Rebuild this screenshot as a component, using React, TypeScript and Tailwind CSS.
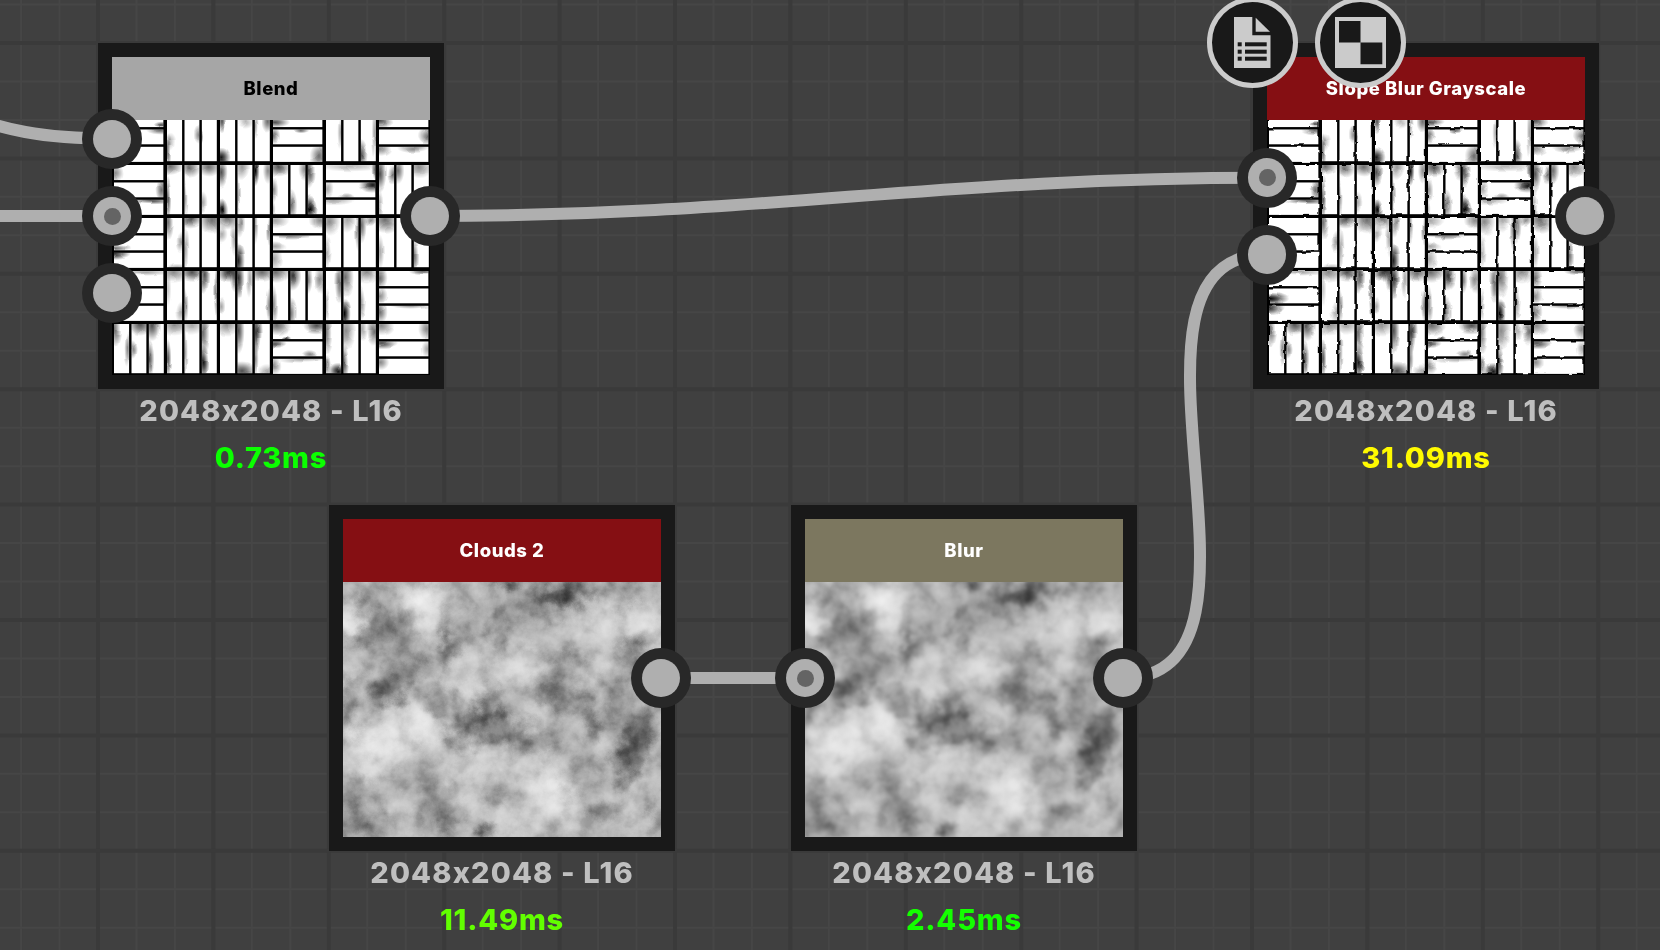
import React from "react";

type Smudge = [number, number, number, number, number];

const MAJOR = 115.4;
const majorX = Array.from({ length: 16 }, (_, i) => 98 - MAJOR + i * MAJOR);
const majorY = Array.from({ length: 10 }, (_, i) => 43 - MAJOR + i * MAJOR);

const CELLS = ["HVVHVH", "HVVHVH", "HVVVHV", "HVVHVV", "HVVVVH", "VVVHVH"];

/* Shading blotches, one list for each half of the tile texture, in thirds of a pixel. */
const LEFT: Smudge[] = [
  [150,15,20,8,.6],[145,34,35,10,.5],[168,100,8,40,.5],[172,70,14,20,.25],[260,45,12,22,.4],[270,50,5,20,.7],[327,10,10,25,.6],[328,115,22,22,.8],[400,7,20,15,.25],[467,8,15,25,.5],[430,20,6,30,.3],
  [10,165,20,20,.4],[152,210,15,28,.5],[120,246,50,8,.6],[175,142,30,22,.5],[168,240,8,50,.6],[235,144,25,25,.5],[220,240,6,40,.3],[290,144,30,22,.5],[272,250,12,25,.3],[328,160,15,35,.6],[328,275,16,28,.9],[390,144,20,30,.35],[378,230,6,50,.3],[430,155,10,35,.9],[468,155,12,30,.4],
  [168,310,12,40,.5],[208,370,12,25,.35],[195,444,25,10,.3],[235,300,30,22,.6],[220,390,8,50,.3],[300,300,30,35,.5],[345,300,35,24,.5],[328,345,15,20,.3],[368,360,10,40,.3],[385,310,12,35,.4],[378,425,16,40,.8],[430,310,8,50,.4],[472,330,6,40,.4],[12,404,34,12,.7],[10,388,40,8,.5],
  [185,460,35,24,.4],[168,510,8,40,.2],[208,580,15,25,.3],[240,460,30,22,.6],[220,560,8,40,.4],[275,470,14,40,.6],[313,520,6,60,.4],[350,460,28,22,.7],[366,480,12,30,.5],[328,560,10,20,.3],[380,480,14,45,.7],[414,480,8,40,.3],[450,460,35,22,.5],[472,560,8,40,.4],[100,460,60,8,.3],[10,539,44,14,.9],[10,565,34,16,.7],
  [9,630,15,40,.5],[47,690,8,40,.4],[85,616,30,28,.6],[62,690,10,20,.4],[120,620,20,35,.6],[112,720,12,45,.6],[190,616,40,28,.4],[168,720,8,45,.6],[240,616,30,24,.3],[220,700,6,60,.3],[273,640,15,50,.5],[272,730,14,40,.8],[345,616,35,28,.4],[380,635,14,50,.6],[390,756,34,22,.6],[432,640,14,50,.7],[430,720,8,40,.4],[467,758,22,20,.3],
];
const RIGHT: Smudge[] = [
  [15,10,35,12,.6],[12,50,15,20,.5],[95,35,20,6,.5],[150,110,24,28,.5],[212,40,8,40,.3],[273,105,16,34,.6],[313,40,6,60,.3],[330,8,34,16,.6],[472,50,25,22,.5],[332,90,25,16,.4],[430,87,38,12,.4],
  [25,144,34,24,.6],[10,215,12,30,.4],[10,270,8,20,.3],[104,150,15,25,.4],[64,260,14,38,.5],[116,155,15,40,.6],[118,268,18,30,.9],[240,142,80,12,.25],[314,155,8,22,.5],[308,198,34,20,.8],[172,210,15,20,.3],[230,232,20,8,.3],[190,244,50,14,.3],[330,165,15,40,.6],[328,260,10,40,.3],[369,165,14,24,.5],[384,155,15,30,.5],[450,144,30,28,.4],
  [12,302,34,20,.3],[150,304,24,22,.4],[60,349,60,8,.4],[12,385,30,12,.3],[12,420,20,28,.3],[178,305,26,34,.4],[170,400,10,40,.3],[232,302,20,30,.3],[264,330,8,50,.4],[275,315,12,44,.5],[300,302,15,15,.4],[345,305,34,28,.5],[330,400,10,40,.3],[433,410,12,40,.5],
  [20,460,34,24,.5],[10,560,10,48,.4],[66,470,22,34,.7],[64,580,14,34,.5],[113,480,12,34,.5],[152,480,15,34,.4],[210,490,12,50,.5],[170,560,8,40,.3],[226,475,20,44,.5],[223,585,15,34,.9],[290,460,30,26,.4],[273,550,12,40,.4],[330,475,18,28,.5],[460,458,34,8,.5],[330,530,18,22,.4],[330,580,18,25,.5],[420,562,50,8,.4],
  [20,620,36,22,.5],[140,620,34,18,.6],[48,658,12,6,.7],[12,675,30,12,.6],[120,706,20,10,.4],[12,740,18,24,.4],[100,721,60,8,.3],[170,640,14,50,.5],[205,758,24,18,.8],[170,740,10,24,.5],[228,635,24,44,.4],[222,730,12,40,.6],[310,635,17,34,.5],[276,630,12,28,.3],[334,620,30,22,.4],[470,630,20,28,.4],[335,672,38,12,.6],[472,690,14,20,.3],[332,730,20,18,.4],
];
const SMUDGES: Smudge[] = [
  ...LEFT.map(([x, y, a, b, o]): Smudge => [x / 3, 62 + y / 3, a / 3, b / 3, o]),
  ...RIGHT.map(([x, y, a, b, o]): Smudge => [158 + x / 3, 62 + y / 3, a / 3, b / 3, o]),
];

const BRICKS = CELLS.flatMap((row, r) =>
  row.split("").flatMap((kind, c) =>
    [0, 1, 2].map((i) =>
      kind === "V"
        ? { x: c * 53 + 2 + i * 17.3, y: r * 53 + 2, w: 15.3, h: 49.4 }
        : { x: c * 53 + 2, y: r * 53 + 2 + i * 17.3, w: 49.6, h: 15.3 },
    ),
  ),
);

function Tiles({ id, rough }: { id: string; rough?: boolean }) {
  return (
    <svg className="block h-[255px] w-[318px]" viewBox="0 63 318 255">
      <defs>
        <radialGradient id={`${id}-g`}>
          <stop offset="0" stopColor="#000" />
          <stop offset=".35" stopColor="#000" stopOpacity=".7" />
          <stop offset=".75" stopColor="#000" stopOpacity=".25" />
          <stop offset="1" stopColor="#000" stopOpacity="0" />
        </radialGradient>
        <filter id={`${id}-w`} x="0" y="0" width="318" height="318" filterUnits="userSpaceOnUse" colorInterpolationFilters="sRGB">
          <feTurbulence type="fractalNoise" baseFrequency="0.11" numOctaves={1} seed={7} />
          <feDisplacementMap in="SourceGraphic" scale={3.2} xChannelSelector="R" yChannelSelector="G" result="d" />
          <feGaussianBlur in="d" stdDeviation="0.35" />
        </filter>
        <filter id={`${id}-e`} x="0" y="0" width="318" height="318" filterUnits="userSpaceOnUse" colorInterpolationFilters="sRGB">
          <feTurbulence type="fractalNoise" baseFrequency="0.07" numOctaves={1} seed={3} />
          <feDisplacementMap in="SourceGraphic" scale={5} xChannelSelector="R" yChannelSelector="G" />
        </filter>
      </defs>
      <rect width="318" height="318" fill="#000" />
      <g filter={rough ? `url(#${id}-w)` : undefined}>
        <rect width="318" height="318" fill="#000" />
        {BRICKS.map((b, i) => (
          <svg key={i} x={b.x} y={b.y} width={b.w} height={b.h} viewBox={`${b.x} ${b.y} ${b.w} ${b.h}`} overflow="hidden">
            <rect x={b.x} y={b.y} width={b.w} height={b.h} fill="#fff" />
            <g filter={`url(#${id}-e)`}>
              {SMUDGES.filter(([x, y]) => x > b.x - 1.2 && x < b.x + b.w + 1.1 && y > b.y - 1.2 && y < b.y + b.h + 1.1).map(
                ([x, y, rx, ry, o], k) => (
                  <ellipse key={k} cx={x} cy={y} rx={rx * 1.3} ry={ry * 1.35} fill={`url(#${id}-g)`} opacity={Math.min(1, o * 1.15)} />
                ),
              )}
            </g>
          </svg>
        ))}
      </g>
    </svg>
  );
}

const LIGHT: Smudge[] = [
  [305,300,50,50,.8],[345,370,45,50,.55],[95,370,40,55,.7],[850,370,110,60,.45],[980,380,60,60,.55],[590,500,60,50,.55],[430,540,60,60,.5],[820,500,30,50,.4],[260,640,50,45,.6],[320,690,50,45,.7],[150,740,80,70,.7],[230,720,80,50,.4],[150,820,60,30,.3],[480,780,110,50,.45],[690,850,80,60,.7],[640,650,40,35,.4],[730,920,80,50,.5],[590,960,80,50,.4],[440,900,60,80,.35],[960,920,70,80,.35],[220,940,60,40,.3],[100,520,30,25,.4],[850,600,40,30,.3],[860,730,40,40,.3],[480,460,40,30,.3],
];
const DARK: Smudge[] = [
  [180,365,45,35,.5],[200,410,70,30,.3],[145,290,40,30,.3],[190,575,40,30,.65],[240,530,50,35,.55],[290,510,50,30,.4],[130,420,40,20,.3],[390,440,28,35,.6],[430,370,50,40,.25],[575,250,30,15,.7],[540,400,25,50,.35],[715,290,35,25,.8],[740,265,80,40,.5],[690,310,100,35,.3],[800,290,30,20,.4],[910,265,40,40,.35],[735,480,35,25,.45],[700,560,50,40,.55],[745,600,45,30,.5],[810,660,22,60,.55],[500,655,45,28,.85],[510,600,30,45,.5],[440,690,40,45,.6],[550,700,50,35,.6],[630,720,60,40,.4],[370,600,50,30,.35],[940,470,40,40,.5],[965,690,35,60,.65],[915,800,35,40,.8],[945,740,30,50,.6],[850,930,40,30,.5],[880,570,50,40,.3],[80,590,25,40,.35],[80,670,25,50,.35],[370,930,50,60,.4],[370,970,20,20,.4],[120,975,70,35,.5],[495,1000,25,20,.6],[520,880,30,40,.25],[330,860,50,60,.2],[1010,960,20,60,.35],[780,850,40,70,.3],[100,900,40,60,.25],[1010,560,30,60,.3],[600,320,80,50,.2],[230,470,60,40,.2],[900,660,50,70,.3],
];

function Clouds({ id, soft }: { id: string; soft?: boolean }) {
  return (
    <svg className="block h-[255px] w-[318px]" viewBox="0 63 318 255">
      <defs>
        <radialGradient id={`${id}-l`}>
          <stop offset="0" stopColor="#fcfcfc" />
          <stop offset=".5" stopColor="#fcfcfc" stopOpacity=".6" />
          <stop offset="1" stopColor="#fcfcfc" stopOpacity="0" />
        </radialGradient>
        <radialGradient id={`${id}-d`}>
          <stop offset="0" stopColor="#202020" />
          <stop offset=".5" stopColor="#202020" stopOpacity=".5" />
          <stop offset="1" stopColor="#202020" stopOpacity="0" />
        </radialGradient>
        <filter id={`${id}-b`} x="-20" y="-20" width="358" height="358" filterUnits="userSpaceOnUse" colorInterpolationFilters="sRGB">
          <feGaussianBlur in="SourceGraphic" stdDeviation="2" result="b" />
          <feTurbulence type="fractalNoise" baseFrequency="0.045" numOctaves={6} seed={11} result="n" />
          <feDisplacementMap in="b" in2="n" scale={26} xChannelSelector="R" yChannelSelector="G" result="d" />
          <feGaussianBlur in="d" stdDeviation={soft ? 1 : 0.4} />
        </filter>
        <filter id={`${id}-n`} x="0" y="0" width="318" height="318" filterUnits="userSpaceOnUse" colorInterpolationFilters="sRGB">
          <feTurbulence type="fractalNoise" baseFrequency="0.055" numOctaves={6} seed={5} />
          <feColorMatrix values="1.8 0 0 0 -.4  1.8 0 0 0 -.4  1.8 0 0 0 -.4  0 0 0 0 1" />
          <feGaussianBlur stdDeviation={soft ? 0.9 : 0.01} />
        </filter>
      </defs>
      <g filter={`url(#${id}-b)`}>
        <rect x="-30" y="-30" width="378" height="378" fill="#b4b4b4" />
        {LIGHT.map(([x, y, a, b, o], i) => (
          <ellipse key={i} cx={(x - 69) / 3} cy={(y - 57) / 3} rx={a / 1.9} ry={b / 1.9} fill={`url(#${id}-l)`} opacity={o} />
        ))}
        {DARK.map(([x, y, a, b, o], i) => (
          <ellipse key={i} cx={(x - 69) / 3} cy={(y - 57) / 3} rx={a / 1.8} ry={b / 1.8} fill={`url(#${id}-d)`} opacity={o * 0.88} />
        ))}
      </g>
      <rect width="318" height="318" filter={`url(#${id}-n)`} className="opacity-50 mix-blend-soft-light" />
    </svg>
  );
}

function Port({ wired }: { wired?: boolean }) {
  return (
    <div className="flex size-[60px] shrink-0 items-center justify-center rounded-full bg-[#282828]">
      <div className="flex size-[38.6px] items-center justify-center rounded-full bg-[#afafaf]">
        {wired && <div className="size-[17px] rounded-full bg-[#646464]" />}
      </div>
    </div>
  );
}

interface NodeProps {
  title: string;
  place: string;
  header: string;
  time: string;
  timeColor: string;
  inputs: boolean[];
  preview: React.ReactNode;
  badges?: React.ReactNode;
}

function GraphNode({ title, place, header, time, timeColor, inputs, preview, badges }: NodeProps) {
  return (
    <div className={`absolute w-[346px] ${place}`}>
      <div className="relative h-[346px] bg-[#191919] p-[14px]">
        <div className={`flex h-[63px] items-center justify-center pb-[2px] text-[18.5px] leading-[28px] font-extrabold tracking-[0.55px] ${header}`}>
          {title}
        </div>
        {preview}
        <div className="absolute inset-y-0 -left-4 flex flex-col justify-center gap-[17px]">
          {inputs.map((wired, i) => (
            <Port key={i} wired={wired} />
          ))}
        </div>
        <div className="absolute inset-y-0 -right-4 flex flex-col justify-center">
          <Port />
        </div>
      </div>
      <div className="-mt-[2.5px] flex flex-col items-center text-[29px] leading-[47px] font-extrabold whitespace-nowrap">
        <div className="tracking-[1.15px] text-[#bfbfbf]">2048x2048 - L16</div>
        <div className={`tracking-[0.8px] ${timeColor}`}>{time}</div>
      </div>
      {badges}
    </div>
  );
}

function Badge({ children }: { children: React.ReactNode }) {
  return (
    <div className="flex size-[91.4px] items-center justify-center rounded-full border-5 border-[#cbcbcb] bg-[#191919]">
      {children}
    </div>
  );
}

function Badges() {
  return (
    <div className="absolute top-[-46px] left-[-46.4px] flex gap-[17px]">
      <Badge>
        <svg width="51" height="51" viewBox="0 0 51 51">
          <path d="M7 0H25.300V18.300H43.500V51H7Z" fill="#cbcbcb" />
          <path d="M28.700 .7L43 14.800H28.700Z" fill="#cbcbcb" />
          <g fill="#191919">
            {[25.3, 32.7, 39.7].map((y) => (
              <g key={y}>
                <rect x="10.700" y={y} width="4" height="4" />
                <rect x="18" y={y} width="21.700" height="4" />
              </g>
            ))}
          </g>
        </svg>
      </Badge>
      <Badge>
        <svg width="51" height="51" viewBox="0 0 51 51">
          <rect width="51" height="51" fill="#cbcbcb" />
          <path d="M4 4H25.500V25.500H4ZM25.500 25.500H47.300V47.300H25.500Z" fill="#191919" />
        </svg>
      </Badge>
    </div>
  );
}

export default function App() {
  return (
    <main className="relative h-[950px] w-[1660px] overflow-hidden bg-[#404040] font-['Inter',sans-serif]">
      <svg className="absolute inset-0" width="1660" height="950">
        <g stroke="#464646" strokeWidth="2">
          {majorX.flatMap((x) => [1, 2].map((k) => <line key={`${x}-${k}`} x1={x + k * 38.47} x2={x + k * 38.47} y1="0" y2="950" />))}
          {majorY.flatMap((y) => [1, 2].map((k) => <line key={`${y}-${k}`} x1="0" x2="1660" y1={y + k * 38.47} y2={y + k * 38.47} />))}
        </g>
        <g stroke="#3a3a3a" strokeWidth="4">
          {majorX.map((x) => <line key={x} x1={x} x2={x} y1="0" y2="950" />)}
          {majorY.map((y) => <line key={y} x1="0" x2="1660" y1={y} y2={y} />)}
        </g>
        <g fill="none" stroke="#afafaf" strokeWidth="12">
          <path d="M-60 103C0 133 50 138.500 112 138.500" />
          <path d="M0 216H112" />
          <path d="M430 216C765 216 932 177.700 1267 177.700" />
          <path d="M661 678H805" />
          <path d="M1123 678C1301 678 1089 254.600 1267 254.600" />
        </g>
      </svg>

      <GraphNode
        title="Blend"
        place="left-[98px] top-[43px]"
        header="bg-[#a6a6a6] text-black"
        time="0.73ms"
        timeColor="text-[#0bff00]"
        inputs={[false, true, false]}
        preview={<Tiles id="blend" />}
      />
      <GraphNode
        title="Slope Blur Grayscale"
        place="left-[1253px] top-[43px]"
        header="bg-[#850f13] text-white"
        time="31.09ms"
        timeColor="text-[#fffa00]"
        inputs={[true, false]}
        preview={<Tiles id="slope" rough />}
        badges={<Badges />}
      />
      <GraphNode
        title="Clouds 2"
        place="left-[329px] top-[505px]"
        header="bg-[#850f13] text-white"
        time="11.49ms"
        timeColor="text-[#62ff00]"
        inputs={[]}
        preview={<Clouds id="clouds" />}
      />
      <GraphNode
        title="Blur"
        place="left-[791px] top-[505px]"
        header="bg-[#7c775f] text-white"
        time="2.45ms"
        timeColor="text-[#14ff00]"
        inputs={[true]}
        preview={<Clouds id="blur" soft />}
      />
    </main>
  );
}
